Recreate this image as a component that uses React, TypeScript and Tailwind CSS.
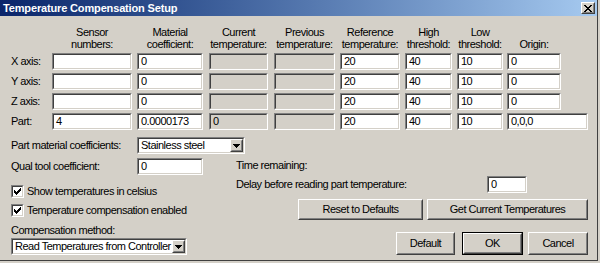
import React from "react";

const Field = ({ className, value = "", disabled = false }: { className: string; value?: string; disabled?: boolean }) => (
  <div className={`h-[17px] border border-t-[#808080] border-l-[#808080] border-b-white border-r-white ${className}`}>
    <div
      className={`h-full w-full border border-t-[#404040] border-l-[#404040] border-b-[#d4d0c8] border-r-[#d4d0c8] flex items-center pl-[2px] leading-none whitespace-nowrap ${
        disabled ? "bg-[#d4d0c8]" : "bg-white"
      }`}
    >
      {value}
    </div>
  </div>
);

const Raised = ({ children, className = "" }: { children?: React.ReactNode; className?: string }) => (
  <div className={`border border-t-white border-l-white border-b-[#404040] border-r-[#404040] ${className}`}>
    <div className="h-full w-full border border-t-[#d4d0c8] border-l-[#d4d0c8] border-b-[#808080] border-r-[#808080] flex items-center justify-center bg-[#d4d0c8]">
      {children}
    </div>
  </div>
);

const Btn = ({ className, children, def = false }: { className: string; children: React.ReactNode; def?: boolean }) =>
  def ? (
    <div className={`border border-black ${className}`}>
      <Raised className="h-full w-full">{children}</Raised>
    </div>
  ) : (
    <Raised className={className}>{children}</Raised>
  );

const Arrow = () => (
  <svg width="7" height="4" viewBox="0 0 7 4" shapeRendering="crispEdges">
    <path d="M0 0h7v1h-7z M1 1h5v1h-5z M2 2h3v1h-3z M3 3h1v1h-1z" fill="#000" />
  </svg>
);

const Select = ({ className, value }: { className: string; value: string }) => (
  <div className={`h-[17px] border border-t-[#808080] border-l-[#808080] border-b-white border-r-white ${className}`}>
    <div className="h-full w-full border border-t-[#404040] border-l-[#404040] border-b-[#d4d0c8] border-r-[#d4d0c8] flex items-stretch bg-white">
      <div className="flex-1 flex items-center pl-[2px] leading-none whitespace-nowrap">{value}</div>
      <Raised className="w-[13px]">
        <Arrow />
      </Raised>
    </div>
  </div>
);

const Check = () => (
  <svg width="7" height="7" viewBox="0 0 7 7" shapeRendering="crispEdges">
    <path
      d="M6 0h1v1h-1z M5 1h2v1h-2z M0 2h1v1h-1z M4 2h3v1h-3z M0 3h2v1h-2z M3 3h3v1h-3z M0 4h5v1h-5z M1 5h3v1h-3z M2 6h1v1h-1z"
      fill="#000"
    />
  </svg>
);

const CheckRow = ({ label }: { label: string }) => (
  <div className="flex items-center h-[13px]">
    <div className="w-[13px] h-[13px] border border-t-[#808080] border-l-[#808080] border-b-white border-r-white">
      <div className="w-full h-full border border-t-[#404040] border-l-[#404040] border-b-[#d4d0c8] border-r-[#d4d0c8] bg-white flex items-center justify-center">
        <Check />
      </div>
    </div>
    <span className="ml-[3px] leading-none whitespace-nowrap">{label}</span>
  </div>
);

const Head = ({ w, lines }: { w: string; lines: string[] }) => (
  <div className={`${w} flex flex-col justify-end items-center text-center leading-[12px] whitespace-nowrap`}>
    {lines.map((l) => (
      <div key={l}>{l}</div>
    ))}
  </div>
);

const rows: { label: string; sensor: string; mat: string; cur: string; ref: string; hi: string; lo: string; origin: string; part?: boolean }[] = [
  { label: "X axis:", sensor: "", mat: "0", cur: "", ref: "20", hi: "40", lo: "10", origin: "0" },
  { label: "Y axis:", sensor: "", mat: "0", cur: "", ref: "20", hi: "40", lo: "10", origin: "0" },
  { label: "Z axis:", sensor: "", mat: "0", cur: "", ref: "20", hi: "40", lo: "10", origin: "0" },
  { label: "Part:", sensor: "4", mat: "0.0000173", cur: "0", ref: "20", hi: "40", lo: "10", origin: "0,0,0", part: true },
];

export default function App() {
  return (
    <div className="w-[600px] h-[263px] bg-[#d4d0c8] pr-[2px] pb-[2px] font-['Liberation_Sans',Arial,sans-serif] text-[11px] tracking-[-0.5px] text-black overflow-hidden">
      <div className="h-full w-full border-r border-b border-[#404040] flex flex-col">
        {/* Title bar */}
        <div className="h-[16px] shrink-0 flex items-center justify-between bg-gradient-to-r from-[#0a246a] to-[#a6caf0]">
          <span className="pl-[3px] text-white font-bold tracking-[-0.15px] leading-none">Temperature Compensation Setup</span>
          <Raised className="w-[14px] h-[12px] mr-[2px]">
            <svg width="8" height="7" viewBox="0 0 8 7" shapeRendering="crispEdges">
              <path
                d="M0 0h2v1h-2z M6 0h2v1h-2z M1 1h2v1h-2z M5 1h2v1h-2z M2 2h4v1h-4z M3 3h2v1h-2z M2 4h4v1h-4z M1 5h2v1h-2z M5 5h2v1h-2z M0 6h2v1h-2z M6 6h2v1h-2z"
                fill="#000"
              />
            </svg>
          </Raised>
        </div>

        {/* Grid */}
        <div className="pl-[11px] pt-[10px]">
          <div className="grid grid-cols-[41px_85px_72px_65px_66px_65px_52px_50px_90px] gap-y-[3px]">
            <div />
            <Head w="w-[80px]" lines={["Sensor", "numbers:"]} />
            <Head w="w-[66px]" lines={["Material", "coefficient:"]} />
            <Head w="w-[59px]" lines={["Current", "temperature:"]} />
            <Head w="w-[61px]" lines={["Previous", "temperature:"]} />
            <Head w="w-[60px]" lines={["Reference", "temperature:"]} />
            <Head w="w-[47px]" lines={["High", "threshold:"]} />
            <Head w="w-[46px]" lines={["Low", "threshold:"]} />
            <Head w="w-[54px]" lines={["Origin:"]} />
            {rows.map((r) => (
              <React.Fragment key={r.label}>
                <div className="h-[17px] flex items-center whitespace-nowrap">{r.label}</div>
                <Field className="w-[80px]" value={r.sensor} />
                <Field className="w-[66px]" value={r.mat} />
                <Field className="w-[59px]" value={r.cur} disabled />
                <Field className="w-[61px]" value="" disabled />
                <Field className="w-[60px]" value={r.ref} />
                <Field className="w-[47px]" value={r.hi} />
                <Field className="w-[46px]" value={r.lo} />
                <Field className={r.part ? "w-[81px]" : "w-[54px]"} value={r.origin} />
              </React.Fragment>
            ))}
          </div>
        </div>

        {/* Part material row */}
        <div className="pl-[11px] mt-[7px] flex items-center h-[17px]">
          <div className="w-[126px] whitespace-nowrap">Part material coefficients:</div>
          <Select className="w-[108px]" value="Stainless steel" />
        </div>

        {/* Lower area */}
        <div className="pl-[11px] flex">
          <div className="w-[225px] flex flex-col">
            <div className="mt-[4px] flex items-center h-[17px]">
              <div className="w-[126px] whitespace-nowrap">Qual tool coefficient:</div>
              <Field className="w-[66px]" value="0" />
            </div>
            <div className="mt-[10px]">
              <CheckRow label="Show temperatures in celsius" />
            </div>
            <div className="mt-[6px]">
              <CheckRow label="Temperature compensation enabled" />
            </div>
            <div className="mt-[7px] leading-[12px] whitespace-nowrap">Compensation method:</div>
            <Select className="mt-[2px] w-[176px]" value="Read Temperatures from Controller" />
          </div>

          <div className="w-[352px] flex flex-col">
            <div className="mt-[5px] leading-[12px] whitespace-nowrap">Time remaining:</div>
            <div className="mt-[5px] flex items-center h-[17px]">
              <div className="w-[251px] whitespace-nowrap">Delay before reading part temperature:</div>
              <Field className="w-[40px]" value="0" />
            </div>
            <div className="mt-[6px] flex justify-end gap-[4px]">
              <Btn className="w-[125px] h-[21px]">Reset to Defaults</Btn>
              <Btn className="w-[161px] h-[21px]">Get Current Temperatures</Btn>
            </div>
            <div className="mt-[12px] flex justify-end">
              <Btn className="w-[59px] h-[23px]">Default</Btn>
              <Btn className="ml-[7px] w-[61px] h-[23px]" def>
                OK
              </Btn>
              <Btn className="ml-[5px] w-[60px] h-[23px]">Cancel</Btn>
            </div>
          </div>
        </div>
      </div>
    </div>
  );
}
